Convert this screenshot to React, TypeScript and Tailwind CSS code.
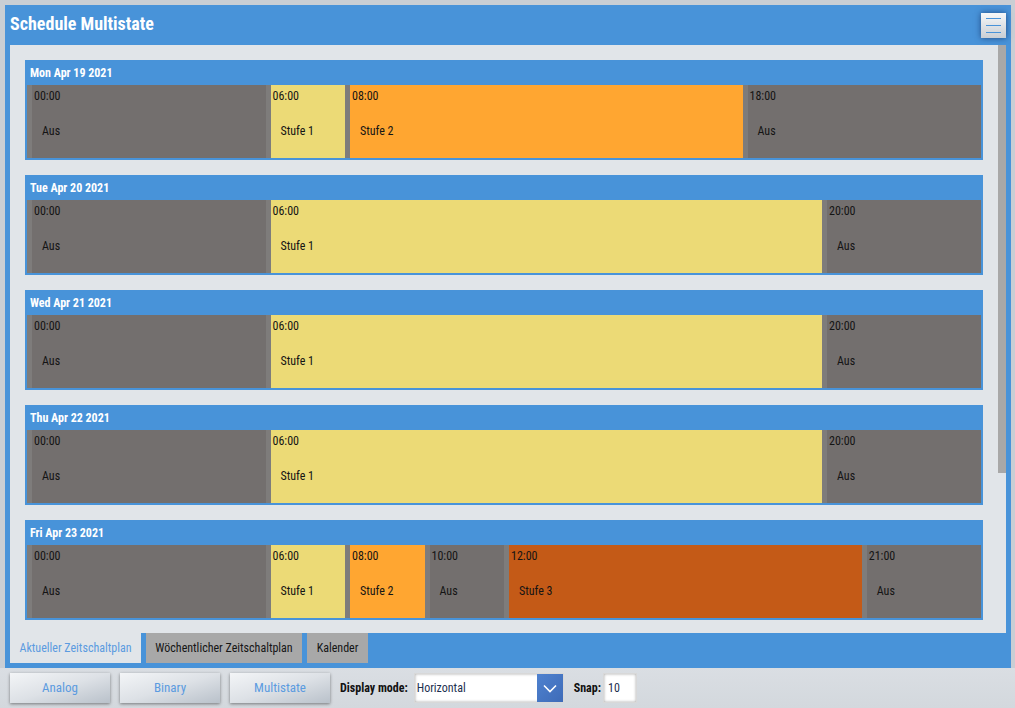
import React from "react";

type Seg = { start: number; end: number; label: string };

const COLORS: Record<string, string> = {
  Aus: "bg-[#736f6e]",
  "Stufe 1": "bg-[#ecda76]",
  "Stufe 2": "bg-[#ffa631]",
  "Stufe 3": "bg-[#c45a17]",
};

const mk = (pts: [number, string][]): Seg[] =>
  pts.map((p, i) => ({ start: p[0], end: i + 1 < pts.length ? pts[i + 1][0] : 24, label: p[1] }));

const days: { title: string; segs: Seg[] }[] = [
  { title: "Mon Apr 19 2021", segs: mk([[0, "Aus"], [6, "Stufe 1"], [8, "Stufe 2"], [18, "Aus"]]) },
  { title: "Tue Apr 20 2021", segs: mk([[0, "Aus"], [6, "Stufe 1"], [20, "Aus"]]) },
  { title: "Wed Apr 21 2021", segs: mk([[0, "Aus"], [6, "Stufe 1"], [20, "Aus"]]) },
  { title: "Thu Apr 22 2021", segs: mk([[0, "Aus"], [6, "Stufe 1"], [20, "Aus"]]) },
  {
    title: "Fri Apr 23 2021",
    segs: mk([[0, "Aus"], [6, "Stufe 1"], [8, "Stufe 2"], [10, "Aus"], [12, "Stufe 3"], [21, "Aus"]]),
  },
];

const ROW_W = 954;
const pad = (h: number) => (h < 10 ? "0" + h : "" + h) + ":00";

function DayCard({ title, segs }: { title: string; segs: Seg[] }) {
  return (
    <div className="w-[958px] h-[100px] shrink-0 bg-[#4893d9] flex flex-col">
      <div className="h-[25px] pl-[5px] flex items-center text-white font-bold text-[12px] leading-none pt-[1px] whitespace-nowrap">
        {title}
      </div>
      <div className="flex h-[73px] px-[2px]">
        {segs.map((s, i) => (
          <div
            key={i}
            className={`h-full border-l-[5px] border-[#7e7c7b] ${COLORS[s.label]} flex flex-col text-[12px] text-[#141414] overflow-hidden whitespace-nowrap`}
            style={{ width: ((s.end - s.start) / 24) * ROW_W }}
          >
            <div className="pl-[2px] pt-[3px] leading-[16px]">{pad(s.start)}</div>
            <div className="pl-[10px] mt-[19px] leading-[16px]">{s.label}</div>
          </div>
        ))}
      </div>
    </div>
  );
}

function ToolButton({ label }: { label: string }) {
  return (
    <div className="w-[100px] h-[30px] shrink-0 flex items-center justify-center text-[13px] text-[#5b9be0] bg-gradient-to-br from-[#f3f5f7] via-[#dde1e6] to-[#b9c1ca] shadow-[0_1px_3px_rgba(0,0,0,0.45)] whitespace-nowrap">
      {label}
    </div>
  );
}

export default function App() {
  return (
    <div
      className="w-[1015px] h-[708px] bg-[#c9ced4] overflow-hidden flex flex-col"
      style={{ fontFamily: '"Roboto Condensed", "Liberation Sans Narrow", "DejaVu Sans Condensed", Roboto, sans-serif' }}
    >
      <div className="ml-[5px] mt-[5px] w-[1006px] h-[663px] bg-[#4893d9] flex flex-col px-[5px] shrink-0">
        <div className="h-[40px] flex items-center justify-between shrink-0">
          <div className="text-white text-[18px] font-bold leading-none pb-[2px] whitespace-nowrap">Schedule Multistate</div>
          <div className="w-[25px] h-[25px] bg-gradient-to-b from-[#f7f8f9] to-[#c9ced4] shadow-[0_0_6px_rgba(20,50,100,0.75)] flex flex-col items-center justify-center gap-[6px]">
            <div className="w-[15px] h-[1px] bg-[#4893d9]" />
            <div className="w-[15px] h-[1px] bg-[#4893d9]" />
            <div className="w-[15px] h-[1px] bg-[#4893d9]" />
          </div>
        </div>
        <div className="h-[588px] bg-[#e1e5e9] flex shrink-0">
          <div className="flex-1 overflow-hidden pt-[15px] pl-[15px] flex flex-col gap-[15px]">
            {days.map((d) => (
              <DayCard key={d.title} title={d.title} segs={d.segs} />
            ))}
          </div>
          <div className="w-[8px] h-full shrink-0">
            <div className="w-[8px] h-[428px] bg-[#a8a8a8]" />
          </div>
        </div>
        <div className="h-[30px] flex gap-[5px] text-[12px] shrink-0 whitespace-nowrap">
          <div className="w-[131px] bg-[#e1e5e9] text-[#5b9be0] flex items-center justify-center">
            Aktueller Zeitschaltplan
          </div>
          <div className="w-[156px] bg-[#a8a8a8] text-[#151515] flex items-center justify-center">
            Wöchentlicher Zeitschaltplan
          </div>
          <div className="w-[61px] bg-[#a8a8a8] text-[#151515] flex items-center justify-center">Kalender</div>
        </div>
      </div>
      <div className="flex-1 bg-gradient-to-b from-[#dadee3] to-[#d3d8dd] flex items-center pl-[10px] gap-[10px]">
        <ToolButton label="Analog" />
        <ToolButton label="Binary" />
        <ToolButton label="Multistate" />
        <div className="text-[12px] font-bold text-[#111] whitespace-nowrap shrink-0">Display mode:</div>
        <div className="w-[150px] h-[30px] shrink-0 bg-white flex border border-[#d8d8d8] shadow-[inset_0_0_3px_rgba(0,0,0,0.35)] -ml-[4px]">
          <div className="flex-1 flex items-center pl-[2px] text-[12px] text-[#1d2f4f]">Horizontal</div>
          <div className="w-[26px] h-full shrink-0 bg-gradient-to-br from-[#4f82cf] to-[#3e6bb8] flex items-center justify-center">
            <svg width="14" height="9" viewBox="0 0 14 9" fill="none">
              <path d="M1 1.5 L7 7.5 L13 1.5" stroke="white" strokeWidth="1.6" />
            </svg>
          </div>
        </div>
        <div className="text-[12px] font-bold text-[#111] whitespace-nowrap shrink-0">Snap:</div>
        <div className="w-[34px] h-[30px] shrink-0 bg-white border border-[#d8d8d8] shadow-[inset_0_0_3px_rgba(0,0,0,0.35)] flex items-center pl-[4px] text-[12px] text-[#1d2f4f] -ml-[8px]">
          10
        </div>
      </div>
    </div>
  );
}
